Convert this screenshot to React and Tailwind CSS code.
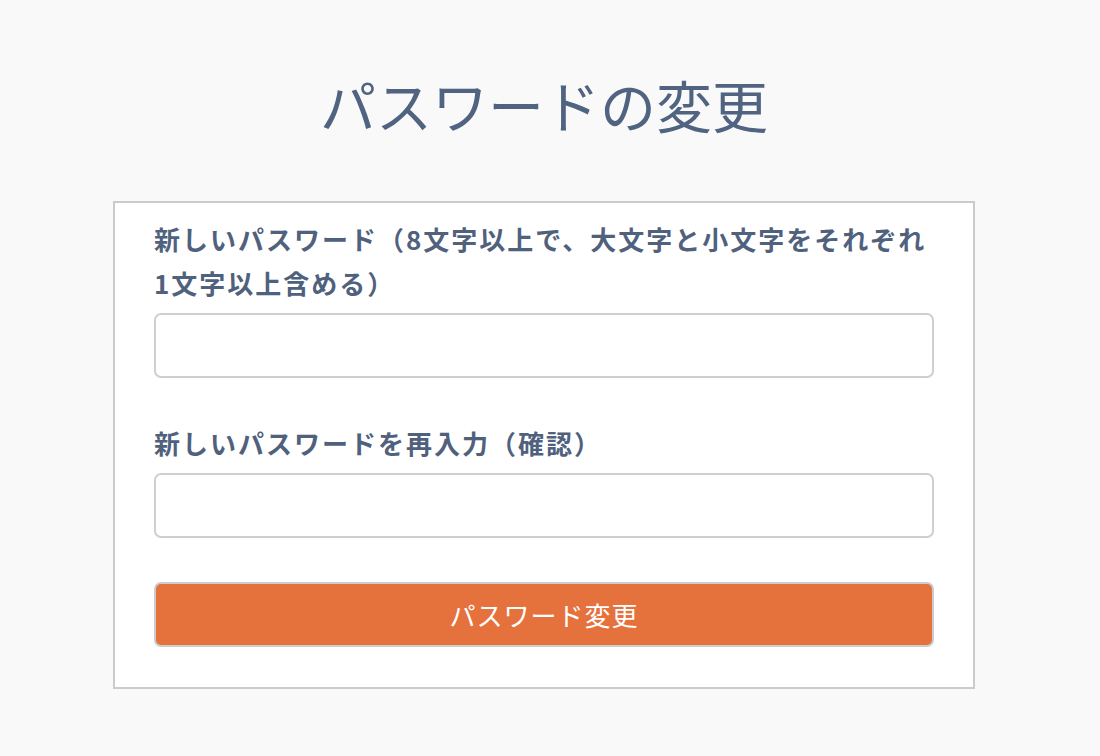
export default function App() {
  const jp = { fontFamily: '"Noto Sans CJK JP", "Noto Sans", sans-serif' };
  return (
    <div className="min-h-[756px] w-full bg-[#f9f9f9]" style={jp}>
      <div className="w-[1088px] flex flex-col items-center pt-[72px]">
        <h1 className="text-[56px] leading-[64px] font-normal text-[#506380] tracking-[0px]">
          パスワードの変更
        </h1>
        <div className="mt-[65px] w-[862px] bg-white border-2 border-[#cbcbcb] px-[39px] pt-[14px] pb-[40px] flex flex-col">
          <label className="text-[26px] leading-[44px] font-bold text-[#50617d] tracking-[2px]">
            新しいパスワード（8文字以上で、大文字と小文字をそれぞれ
            <br />
            1文字以上含める）
          </label>
          <input
            type="password"
            className="mt-[8px] h-[65px] w-full rounded-[7px] border-2 border-[#cfcfcf] bg-white outline-none"
          />
          <label className="mt-[43px] text-[26px] leading-[44px] font-bold text-[#50617d] tracking-[2px]">
            新しいパスワードを再入力（確認）
          </label>
          <input
            type="password"
            className="mt-[8px] h-[65px] w-full rounded-[7px] border-2 border-[#cfcfcf] bg-white outline-none"
          />
          <button className="mt-[44px] h-[65px] w-full rounded-[7px] border-2 border-[#cdcdcd] bg-[#e5713c] text-white text-[26px] font-normal tracking-[1px]">
            パスワード変更
          </button>
        </div>
      </div>
    </div>
  );
}
